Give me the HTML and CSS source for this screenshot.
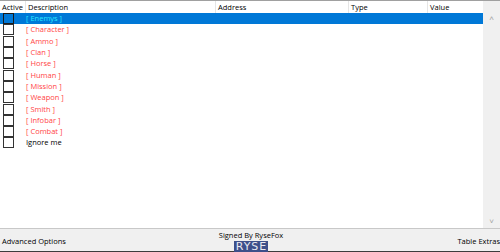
FILE: index.html
```html
<!DOCTYPE html>
<html>
<head>
    <meta name="viewport" content="width=device-width, initial-scale=1.0">
    <title>Cheat Table</title>
    <link rel="stylesheet" href="styles.css">
</head>
<body>
    <div class="window">
        <div class="table-area">
            <div class="table">
                <div class="header">
                    <div class="col col-active">Active</div>
                    <div class="col col-desc">Description</div>
                    <div class="col col-addr">Address</div>
                    <div class="col col-type">Type</div>
                    <div class="col col-value">Value</div>
                </div>
                <div class="rows">
                    <div class="row selected"><span class="check"></span><span class="desc group">[ Enemys ]</span></div>
                    <div class="row"><span class="check"></span><span class="desc group">[ Character ]</span></div>
                    <div class="row"><span class="check"></span><span class="desc group">[ Ammo ]</span></div>
                    <div class="row"><span class="check"></span><span class="desc group">[ Clan ]</span></div>
                    <div class="row"><span class="check"></span><span class="desc group">[ Horse ]</span></div>
                    <div class="row"><span class="check"></span><span class="desc group">[ Human ]</span></div>
                    <div class="row"><span class="check"></span><span class="desc group">[ Mission ]</span></div>
                    <div class="row"><span class="check"></span><span class="desc group">[ Weapon ]</span></div>
                    <div class="row"><span class="check"></span><span class="desc group">[ Smith ]</span></div>
                    <div class="row"><span class="check"></span><span class="desc group">[ Infobar ]</span></div>
                    <div class="row"><span class="check"></span><span class="desc group">[ Combat ]</span></div>
                    <div class="row"><span class="check"></span><span class="desc">Ignore me</span></div>
                </div>
            </div>
            <div class="scrollbar">
                <span class="arrow">&#708;</span>
                <span class="arrow">&#709;</span>
            </div>
        </div>
        <div class="footer">
            <div class="footer-left">Advanced Options</div>
            <div class="footer-center">
                <div class="signed">Signed By RyseFox</div>
                <div class="logo">RYSE</div>
            </div>
            <div class="footer-right">Table Extras</div>
        </div>
    </div>
</body>
</html>
```

FILE: styles.css
```css
body {
    margin: 0;
    font-family: "Open Sans", "Liberation Sans", sans-serif;
    font-size: 7.5px;
    color: #000;
    background: #fff;
}
.window {
    width: 500px;
    height: 252px;
    display: flex;
    flex-direction: column;
    overflow: hidden;
}
.table-area {
    flex: 1;
    display: flex;
    border-top: 1px solid #a0a0a0;
}
.table {
    flex: 1;
    display: flex;
    flex-direction: column;
}
.header {
    height: 12px;
    display: flex;
    align-items: center;
    background: #fff;
}
.col {
    height: 12px;
    line-height: 12px;
    padding-left: 2px;
    border-right: 1px solid #e5e5e5;
    box-sizing: border-box;
    white-space: nowrap;
    color: #000;
}
.col-active { width: 26px; padding-left: 2px; }
.col-desc { width: 190px; }
.col-addr { width: 133px; }
.col-type { width: 79px; }
.col-value { flex: 1; border-right: none; }
.row {
    height: 11.3px;
    display: flex;
    align-items: center;
}
.row.selected {
    background: #0078d7;
}
.check {
    width: 9px;
    height: 9px;
    margin-left: 3px;
    border: 1px solid #333;
    background: #fff;
    flex-shrink: 0;
}
.selected .check {
    background: #0078d7;
    border-color: #1a1a1a;
}
.desc {
    margin-left: 12px;
    line-height: 11px;
    white-space: nowrap;
}
.desc.group {
    color: #ff4545;
}
.selected .desc.group {
    color: #28e8ff;
}
.scrollbar {
    width: 17px;
    background: #f0f0f0;
    display: flex;
    flex-direction: column;
    justify-content: space-between;
    align-items: center;
    color: #a3a3a3;
    font-size: 8px;
    padding: 12px 0 2px;
}
.arrow {
    line-height: 10px;
}
.footer {
    height: 22px;
    background: #f0f0f0;
    border-top: 1px solid #c8c8c8;
    border-bottom: 1px solid #3c3c3c;
    display: flex;
    align-items: flex-start;
}
.footer-left {
    padding: 7px 0 0 2px;
    flex: 1;
}
.footer-right {
    padding: 7px 0 0 0;
    flex: 1;
    text-align: right;
    white-space: nowrap;
}
.footer-center {
    display: flex;
    flex-direction: column;
    align-items: center;
    padding-top: 2px;
}
.signed {
    line-height: 9px;
    white-space: nowrap;
}
.logo {
    margin-top: 1px;
    background: #3d4f8a;
    color: #e8e8f0;
    font-family: "DejaVu Sans", sans-serif;
    font-size: 11px;
    letter-spacing: 1px;
    line-height: 12px;
    padding: 0 1px 0 2px;
}
```
